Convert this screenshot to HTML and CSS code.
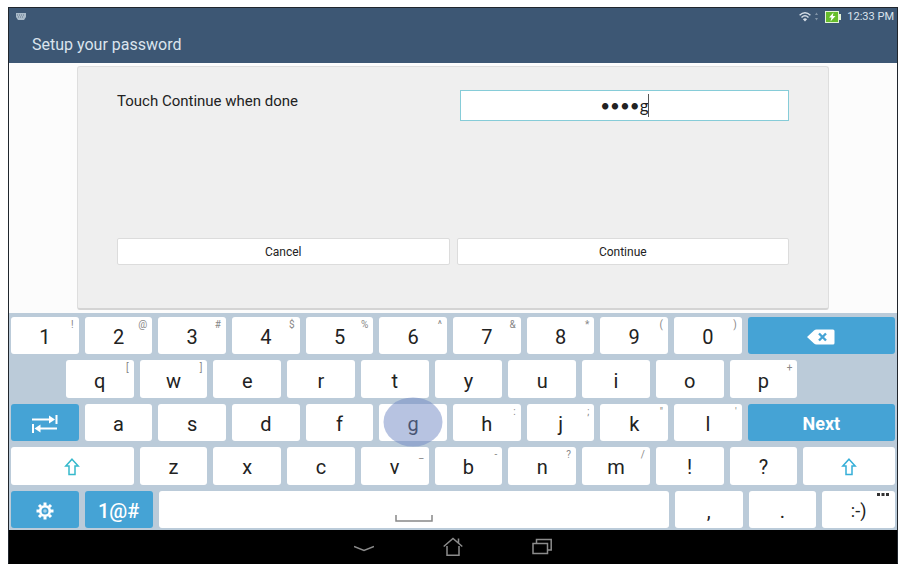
FILE: index.html
```html
<!DOCTYPE html>
<html lang="en">
<head>
<meta charset="utf-8">
<meta name="viewport" content="width=device-width, initial-scale=1">
<title>Setup your password</title>
<link rel="stylesheet" href="styles.css">
</head>
<body>
<div class="device">
  <header class="header">
    <div class="status">
      <svg class="status-keyboard" width="10" height="7" viewBox="0 0 10 7" aria-hidden="true"><path d="M0 0h10v4l-2 3H2L0 4z" fill="#a9bac9"/><path d="M1 2h8M2 4h6" stroke="#66798d" stroke-dasharray="1 1"/></svg>
      <div class="status-right">
        <svg width="12" height="11" viewBox="0 0 12 11" fill="none" stroke="#d5dde6" stroke-width="1.4" aria-hidden="true"><path d="M.6 4.2Q6-.8 11.4 4.2M2.5 6.4Q6 3 9.500 6.400"/><path d="M6 10.500 3.900 8.200Q6 6.500 8.100 8.200z" fill="#d5dde6" stroke="none"/></svg>
        <svg width="4" height="11" viewBox="0 0 4 11" fill="#8294a8" aria-hidden="true"><path d="M0 4 1.500 1.500 3 4zM0 7h3L1.500 9.500z"/></svg>
        <svg class="battery" width="16" height="12" viewBox="0 0 16 12" aria-hidden="true"><path d="M0 0h14v3h2v6h-2v3H0z" fill="#e4f3d8"/><path d="M1 1h12v10H1z" fill="#66bd2c"/><path d="M8.500 1.500 4 6.500h2.500L5.500 10.500 10.500 5H7.800z" fill="#fff"/></svg>
        <span>12:33 PM</span>
      </div>
    </div>
    <h1 class="title">Setup your password</h1>
  </header>

  <main class="content">
    <form class="panel">
      <div class="field">
        <label for="password">Touch Continue when done</label>
        <div class="entry">
          <input id="password" type="text" value="••••g" autocomplete="off">
          <span class="caret"></span>
        </div>
      </div>
      <div class="actions">
        <button type="button">Cancel</button>
        <button type="button">Continue</button>
      </div>
    </form>
  </main>

  <section class="keyboard" aria-label="Keyboard">
    <div class="row">
      <button class="key">1<span class="alt">!</span></button>
      <button class="key">2<span class="alt">@</span></button>
      <button class="key">3<span class="alt">#</span></button>
      <button class="key">4<span class="alt">$</span></button>
      <button class="key">5<span class="alt">%</span></button>
      <button class="key">6<span class="alt">^</span></button>
      <button class="key">7<span class="alt">&amp;</span></button>
      <button class="key">8<span class="alt">*</span></button>
      <button class="key">9<span class="alt">(</span></button>
      <button class="key">0<span class="alt">)</span></button>
      <button class="key double blue" aria-label="Backspace"><svg width="28" height="16" viewBox="0 0 28 16"><path d="M0 8 7 1.500Q8 .5 9.500.5H26Q27.500.5 27.500 2v12q0 1.500-1.500 1.500H9.500Q8 15.500 7 14.500z" fill="#fff"/><path d="m12 4.500 7 7m0-7-7 7" stroke="#45a3d5" stroke-width="2.400"/></svg></button>
    </div>
    <div class="row">
      <span class="indent"></span>
      <button class="key">q<span class="alt">[</span></button>
      <button class="key">w<span class="alt">]</span></button>
      <button class="key">e</button>
      <button class="key">r</button>
      <button class="key">t</button>
      <button class="key">y</button>
      <button class="key">u</button>
      <button class="key">i</button>
      <button class="key">o</button>
      <button class="key">p<span class="alt">+</span></button>
      <span class="outdent"></span>
    </div>
    <div class="row">
      <button class="key blue" aria-label="Tab"><svg width="26" height="18" viewBox="0 0 26 18" stroke="#fff" stroke-width="2" fill="none"><path d="M0 4.500h19M24.500 0v9M7 13.500h18M1 9v9"/><path d="M17 .5v8l6-4zM8.500 9.500v8l-6-4z" fill="#fff" stroke="none"/></svg></button>
      <button class="key">a</button>
      <button class="key">s</button>
      <button class="key">d</button>
      <button class="key">f</button>
      <button class="key">g<span class="touch"></span></button>
      <button class="key">h<span class="alt">:</span></button>
      <button class="key">j<span class="alt">;</span></button>
      <button class="key">k<span class="alt">"</span></button>
      <button class="key">l<span class="alt">'</span></button>
      <button class="key double blue next">Next</button>
    </div>
    <div class="row">
      <button class="key shift" aria-label="Shift"><svg width="16" height="18" viewBox="0 0 16 18"><path d="M8 1.200 14.200 8H11v8.500H5V8H1.800z" fill="none" stroke="#36b9cc" stroke-width="1.500"/></svg></button>
      <button class="key">z</button>
      <button class="key">x</button>
      <button class="key">c</button>
      <button class="key">v<span class="alt">_</span></button>
      <button class="key">b<span class="alt">-</span></button>
      <button class="key">n<span class="alt">?</span></button>
      <button class="key">m<span class="alt">/</span></button>
      <button class="key">!</button>
      <button class="key">?</button>
      <button class="key shift-right" aria-label="Shift"><svg width="16" height="18" viewBox="0 0 16 18"><path d="M8 1.200 14.200 8H11v8.500H5V8H1.800z" fill="none" stroke="#36afd8" stroke-width="1.500"/></svg></button>
    </div>
    <div class="row">
      <button class="key blue" aria-label="Settings"><svg width="18" height="18" viewBox="0 0 18 18"><g stroke="#fff" fill="none"><circle cx="9" cy="9" r="4.800" stroke-width="2.600"/><path d="M9 .5v3M9 14.500v3M.5 9h3M14.500 9h3M3 3l2 2M13 13l2 2M15 3l-2 2M5 13l-2 2" stroke-width="3"/></g><circle cx="9" cy="9" r="1.800" fill="#a5d2ea"/></svg></button>
      <button class="key blue symbols">1@#</button>
      <button class="key space" aria-label="Space"><svg width="38" height="7" viewBox="0 0 38 7"><path d="M1 0v6h36V0" fill="none" stroke="#888" stroke-width="1.500"/></svg></button>
      <button class="key">,</button>
      <button class="key">.</button>
      <button class="key smiley">:-)<svg class="more" width="12" height="3" viewBox="0 0 12 3" fill="#333"><path d="M0 0h3v3H0zM4.500 0h3v3h-3zM9 0h3v3H9z"/></svg></button>
    </div>
  </section>

  <nav class="navbar" aria-label="System">
    <button aria-label="Hide keyboard"><svg width="20" height="20" viewBox="0 0 20 20"><path d="M0 9.500 10 13.500 20 9.500"/></svg></button>
    <button aria-label="Home"><svg width="20" height="20" viewBox="0 0 20 20"><path d="M.7 9.500 10 1.500l9.300 8M15.500 6V1.500M4 9v9.300h12V9"/></svg></button>
    <button aria-label="Recent apps"><svg width="20" height="20" viewBox="0 0 20 20"><path d="M1 6.500h14.500v10H1zM4.500 6V2.500h14.700v10.500H16"/></svg></button>
  </nav>
</div>
</body>
</html>
```
FILE: styles.css
```css
* {
  box-sizing: border-box;
}

body {
  margin: 0;
  padding: 7px 6px 1px 8px;
  background: #fff;
  font-family: Roboto, "Liberation Sans", sans-serif;
  color: #222;
}

button {
  margin: 0;
  padding: 0;
  border: 0;
  font: inherit;
  color: inherit;
}

svg {
  display: block;
}

.device {
  display: flex;
  flex-direction: column;
  min-height: calc(100vh - 8px);
  border: 1px solid #20262d;
  border-bottom-color: #000;
  background: #fcfcfc;
}

.header {
  height: 55px;
  background: #3d5774;
  color: #dbe4ed;
}

.status {
  display: flex;
  justify-content: space-between;
  align-items: center;
  height: 17px;
  padding: 0 3px 0 7px;
  font-size: 11px;
}

.status-right {
  display: flex;
  align-items: center;
  gap: 4px;
}

.battery {
  margin: 0 2px;
}

.title {
  margin: 0;
  padding: 8px 23px 0;
  font-size: 16px;
  font-weight: 400;
  line-height: 24px;
}

.content {
  display: flex;
  flex: 1;
  padding: 3px 68px;
}

.panel {
  display: flex;
  flex: 1;
  flex-direction: column;
  justify-content: space-between;
  gap: 20px;
  padding: 23px 39px 43px;
  border: 1px solid #dedede;
  border-bottom: 2px solid #d4d4d4;
  border-radius: 3px;
  background: #efefef;
}

.field {
  display: flex;
  justify-content: space-between;
}

.field label {
  font-size: 15px;
  line-height: 22px;
}

.entry {
  position: relative;
  width: 49%;
}

.entry input {
  display: block;
  width: 100%;
  height: 31px;
  padding: 0;
  border: 1px solid #86ccd8;
  border-radius: 0;
  outline: 0;
  background: #fff;
  color: #222;
  font-family: Lato, sans-serif;
  font-size: 17px;
  text-align: center;
}

.caret {
  position: absolute;
  top: 4px;
  left: calc(50% + 24px);
  width: 1px;
  height: 23px;
  background: #555;
}

.actions {
  display: grid;
  grid-template-columns: 1fr 1fr;
  gap: 7px;
}

.actions button {
  height: 27px;
  border: 1px solid #dcdcdc;
  border-radius: 2px;
  background: #fff;
  font-size: 12px;
}

.keyboard {
  display: grid;
  grid-template-rows: repeat(5, 1fr);
  gap: 6px;
  height: 217px;
  padding: 4px 2px 2px;
  background: #bbcbd9;
}

.row {
  display: flex;
  gap: 6px;
}

.key {
  position: relative;
  display: flex;
  flex: 68 1 0;
  align-items: center;
  justify-content: center;
  min-width: 0;
  padding-top: 3px;
  border-radius: 3px;
  background: #fff;
  font-size: 20px;
  line-height: 24px;
}

.alt {
  position: absolute;
  top: 2px;
  right: 5px;
  color: #888;
  font-size: 10px;
  line-height: 12px;
}

.blue {
  background: #45a3d5;
  color: #fff;
}

.double {
  flex-grow: 148;
}

.next {
  font-size: 18px;
  font-weight: 700;
}

.symbols {
  font-weight: 500;
}

.indent {
  flex: 49 1 0;
}

.outdent,
.shift-right {
  flex: 92 1 0;
}

.shift {
  flex-grow: 123;
}

.key.space {
  flex-grow: 512;
  align-items: flex-end;
  padding-bottom: 6px;
}

.smiley {
  flex-grow: 73;
  font-size: 18px;
}

.more {
  position: absolute;
  top: 2px;
  right: 6px;
}

.touch {
  position: absolute;
  top: 50%;
  left: 50%;
  z-index: 1;
  width: 59px;
  height: 49px;
  border-radius: 50%;
  background: rgba(112, 135, 195, 0.5);
  transform: translate(-50%, -50%);
}

.navbar {
  display: flex;
  justify-content: center;
  gap: 69px;
  height: 33px;
  background: #000;
}

.navbar button {
  display: flex;
  align-items: center;
  background: none;
}

.navbar svg {
  fill: none;
  stroke: #8c8c8c;
  stroke-width: 1.5;
}
```
